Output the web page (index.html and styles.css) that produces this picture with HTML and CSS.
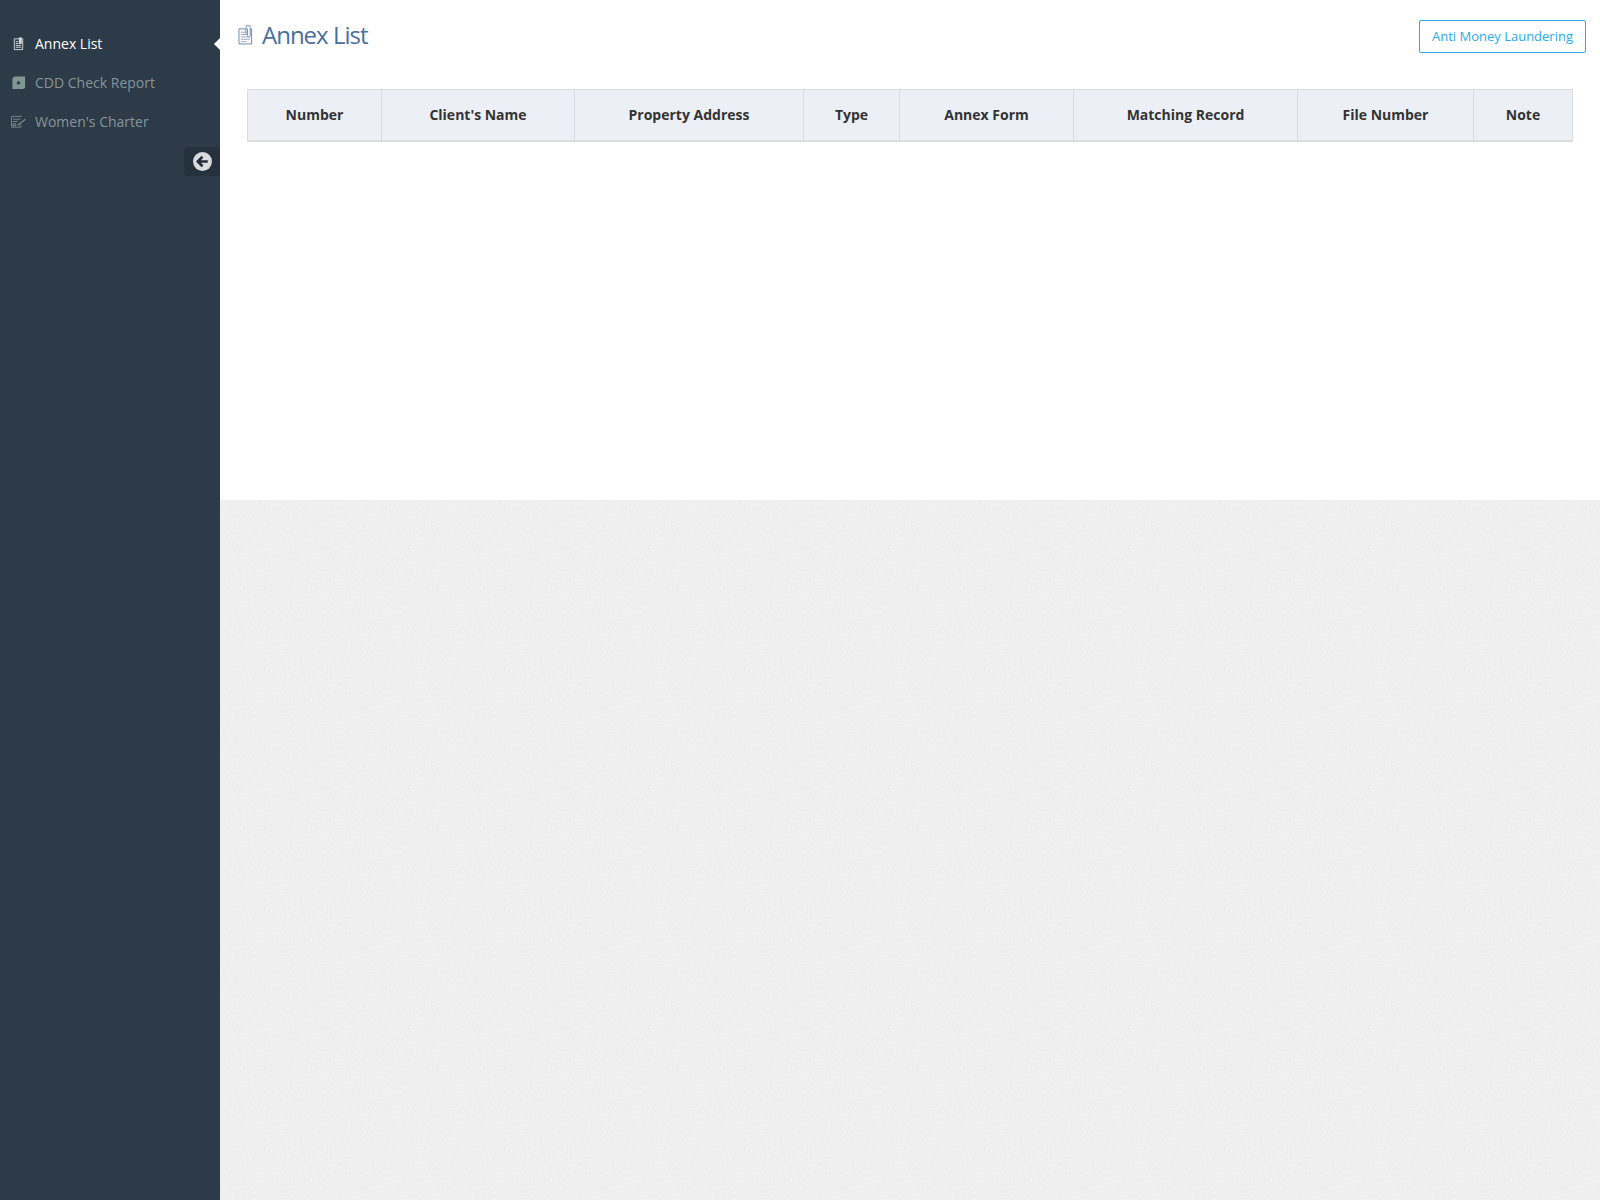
FILE: index.html
```html
<!DOCTYPE html>
<html lang="en">
<head>
<meta charset="utf-8">
<title>Annex List</title>
<link rel="stylesheet" href="styles.css">
</head>
<body>
<div class="app">
  <aside class="sidebar">
    <nav class="nav">
      <a class="nav-item active">
        <svg class="nav-icon" viewBox="0 0 16 16"><path d="M3.500 3h9v11.500h-9z" fill="none" stroke="currentColor"/><path d="M5 6h3M5 8h3M5 10h6M5 12h6" stroke="currentColor"/><path d="M8.500 1.500h3v7h-3z" fill="currentColor"/></svg>
        <span>Annex List</span>
      </a>
      <a class="nav-item">
        <svg class="nav-icon" viewBox="0 0 16 16"><path d="M1.500 3.500 3.500 1.500h11.500v12L13 15H1.500z" fill="#7f9691"/><path d="M6 8.500h4M8 6.500v4" stroke="#2d3b48" stroke-width="1.500"/></svg>
        <span>CDD Check Report</span>
      </a>
      <a class="nav-item">
        <svg class="nav-icon" viewBox="0 0 16 16"><path d="M11.500 2.500H.5v11.500h10V11" fill="none" stroke="currentColor"/><path d="M2 5.500h8M2 8h5M2 10.500h3v2H2z" fill="none" stroke="currentColor"/><path d="M7 12 15.500 5.500" stroke="currentColor" stroke-width="1.300"/></svg>
        <span>Women's Charter</span>
      </a>
    </nav>
    <div class="collapse">
      <svg class="collapse-icon" viewBox="0 0 18 18"><circle cx="9" cy="9" r="9" fill="#d9dcdf"/><path d="M14 9H5M9 4.500 4.500 9 9 13.500" fill="none" stroke="#222d38" stroke-width="2.400"/></svg>
    </div>
  </aside>
  <main class="main">
    <section class="panel">
      <header class="head">
        <h1 class="title">
          <svg class="title-icon" viewBox="0 0 16 22"><path d="M1 4.500h13.500v16H1z" fill="none" stroke="#5f86b0"/><path d="M3 8h5M3 10.500h5M3 13h10M3 15.500h10M3 18h6" stroke="#8fa5bd"/><path d="M8.500 11V3a2 2 0 0 1 4.500 0v8.500a1.500 1.500 0 0 1-3 0V4" fill="#fff" stroke="#5f86b0"/></svg>
          <span>Annex List</span>
        </h1>
        <a class="btn">Anti Money Laundering</a>
      </header>
      <table class="grid">
        <thead>
          <tr>
            <th class="c1">Number</th>
            <th class="c2">Client's Name</th>
            <th class="c3">Property Address</th>
            <th class="c4">Type</th>
            <th class="c5">Annex Form</th>
            <th class="c6">Matching Record</th>
            <th class="c7">File Number</th>
            <th class="c8">Note</th>
          </tr>
        </thead>
      </table>
    </section>
  </main>
</div>
</body>
</html>
```
FILE: styles.css
```css
* { box-sizing: border-box; }
html, body { margin: 0; height: 100%; }
body {
  font-family: "Open Sans", "Liberation Sans", sans-serif;
  background-color: #ececec;
  background-image: url("data:image/svg+xml,%3Csvg xmlns='http://www.w3.org/2000/svg' width='240' height='240'%3E%3Cfilter id='n'%3E%3CfeTurbulence type='fractalNoise' baseFrequency='.7' numOctaves='2' stitchTiles='stitch'/%3E%3CfeColorMatrix values='0 0 0 0 1 0 0 0 0 1 0 0 0 0 1 0 0 0 .6 -.14'/%3E%3C/filter%3E%3Crect width='240' height='240' filter='url(%23n)'/%3E%3C/svg%3E");
  color: #333;
}
.app { display: flex; min-height: 1200px; }
.sidebar {
  width: 220px;
  flex: none;
  background: #2d3a47;
  padding-top: 24px;
  display: flex;
  flex-direction: column;
}
.nav { display: flex; flex-direction: column; }
.nav-item {
  position: relative;
  display: flex;
  align-items: center;
  gap: 9px;
  height: 39px;
  padding-left: 11px;
  font-size: 14px;
  color: #87959a;
}
.nav-item.active { color: #fff; }
.nav-item.active .nav-icon { color: #d5d9dc; }
.nav-item.active::after {
  content: "";
  position: absolute;
  right: 0;
  top: 14px;
  border: 6px solid transparent;
  border-right-color: #fff;
  border-left-width: 0;
}
.nav-icon { width: 15px; height: 15px; color: #7b8b90; flex: none; }
.collapse {
  align-self: flex-end;
  margin-top: 6px;
  width: 36px;
  height: 29px;
  background: #25313d;
  border-radius: 4px 0 0 4px;
  display: flex;
  align-items: center;
  padding-left: 9px;
  padding-bottom: 1px;
}
.collapse-icon { width: 19px; height: 19px; }
.main { flex: 1; min-width: 0; }
.panel { background: #fff; height: 500px; padding: 19px 14px 0 17px; }
.head { display: flex; justify-content: space-between; align-items: flex-start; height: 70px; }
.title {
  margin: 0;
  display: flex;
  align-items: center;
  gap: 9px;
  height: 30px;
  font-size: 24px;
  font-weight: 400;
  letter-spacing: -1px;
  color: #4a6f9c;
}
.title-icon { width: 15px; height: 22px; margin: 2px 0 0 1px; flex: none; }
.btn {
  display: flex;
  align-items: center;
  justify-content: center;
  width: 167px;
  height: 33px;
  margin-top: 1px;
  padding-bottom: 2px;
  border: 1px solid #29abe2;
  border-radius: 2px;
  font-size: 13px;
  color: #29abe2;
}
.grid {
  margin-left: 10px;
  width: 1325px;
  table-layout: fixed;
  border-collapse: collapse;
}
.grid th {
  height: 51px;
  padding: 0;
  background: #eceff6;
  border: 1px solid #ddd;
  border-bottom-width: 2px;
  font-size: 14px;
  font-weight: 700;
  color: #333;
  text-align: center;
}
.c1 { width: 134px; }
.c2 { width: 193px; }
.c3 { width: 229px; }
.c4 { width: 96px; }
.c5 { width: 174px; }
.c6 { width: 224px; }
.c7 { width: 176px; }
.c8 { width: 99px; }
```
